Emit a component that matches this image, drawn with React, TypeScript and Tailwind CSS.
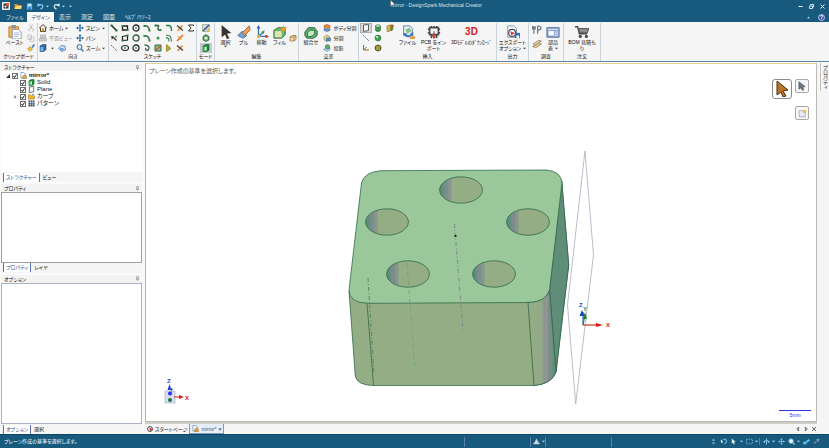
import { useState } from 'react'
import type { ReactNode } from 'react'

const icons: Record<string, ReactNode> = {
  app: (
    <>
      <rect width="16" height="16" rx="2" fill="#f4f4f4" />
      <path d="M3 3h6l4 4v6H3z" fill="#3c3c3c" />
      <path d="M7 2h7v6l-3 1z" fill="#e8542c" />
      <circle cx="7" cy="9" r="2" fill="#fff" />
    </>
  ),
  folder: (
    <>
      <path d="M1 4h5l2 2h7v8H1z" fill="#d99a2b" />
      <path d="M4 8h12l-3 6H1z" fill="#ffd77a" />
    </>
  ),
  save: (
    <>
      <path d="M2 1h12v14H2z" fill="#5fb8f0" />
      <path d="M5 2h6v5H5z" fill="#d8effc" />
      <path d="M5 10h6v5H5z" fill="#2577b5" />
    </>
  ),
  undo: (
    <>
      <path d="M4 5c6-3 10 0 9 4-1 3-3 4-5 5" fill="none" stroke="#7cc8ff" strokeWidth="3" />
      <path d="M0 8l2-8 6 6z" fill="#7cc8ff" />
    </>
  ),
  redo: (
    <>
      <path d="M12 5C6 2 2 5 3 9c1 3 3 4 5 5" fill="none" stroke="#d9e8f2" strokeWidth="3" />
      <path d="M16 8l-2-8-6 6z" fill="#d9e8f2" />
    </>
  ),
  paste: (
    <>
      <path d="M1 2h11v12H1z" fill="#f0b659" stroke="#b87b25" />
      <path d="M4 0h5v4H4z" fill="#8c929c" />
      <path d="M5 5h7l3 3v8H5z" fill="#fff" stroke="#8a94a8" />
      <path d="M7 9h6M7 11h6M7 13h5" stroke="#9db3d8" />
    </>
  ),
  cut: <path d="M5 1l4 9M11 1L7 10M6 10a2 2 0 1 0 .1 3M10 10a2 2 0 1 1-.1 3" fill="none" stroke="#b4b4b4" strokeWidth="1.6" />,
  copy: <path d="M2 2h7v9H2zM6 6h8v9H6z" fill="#f0f0f0" stroke="#bdbdbd" strokeWidth="1.4" />,
  brush: (
    <>
      <path d="M15 1l-5 6" stroke="#3568b8" strokeWidth="3" />
      <path d="M6 5l5 5-5 5-5-5z" fill="#e8c13f" stroke="#93701c" />
    </>
  ),
  home: (
    <>
      <path d="M1 8l7-7 7 7h-2v7H3V8z" fill="#ece8dc" stroke="#4d4433" strokeWidth="2" />
      <path d="M6 9h4v6H6z" fill="#c9922e" />
    </>
  ),
  plan: <path d="M3 2h10v5H3zM1 9h14v5H1z" fill="#d0d0d0" stroke="#a9a9a9" strokeWidth="1.4" />,
  cubeBlue: (
    <>
      <path d="M2 4l5-3h7v10l-4 4H2z" fill="#2b62a8" stroke="#173a66" />
      <path d="M3 6h6v8H3z" fill="#79b0e8" />
    </>
  ),
  viewCube: (
    <>
      <path d="M1 9l5-6 8 1 1 8-8 3z" fill="#cddff4" stroke="#466da3" strokeWidth="1.4" />
      <path d="M4 8h7v5H4z" fill="#6aa2dc" />
    </>
  ),
  move4: (
    <>
      <path d="M8 2v12M2 8h12" stroke="#2e6ca8" strokeWidth="2.4" />
      <path d="M8 0l3 4H5zM8 16l3-4H5zM0 8l4-3v6zM16 8l-4-3v6z" fill="#2e6ca8" />
    </>
  ),
  zoom: (
    <>
      <circle cx="7" cy="6" r="5" fill="#d9ebfa" stroke="#3a6b99" strokeWidth="2" />
      <path d="M10 10l5 5" stroke="#3a6b99" strokeWidth="2.6" />
    </>
  ),
  line: (
    <>
      <path d="M3 3l10 10" stroke="#1f1f1f" strokeWidth="2.8" />
      <path d="M1 1h4v4H1zM11 11h4v4h-4z" fill="#2c6b46" />
    </>
  ),
  rect: (
    <>
      <path d="M3 4h10v8H3z" fill="none" stroke="#1f1f1f" strokeWidth="2.6" />
      <path d="M1 2h4v4H1zM11 10h4v4h-4z" fill="#2c8a46" />
    </>
  ),
  circle: (
    <>
      <circle cx="8" cy="8" r="6" fill="none" stroke="#2b2b2b" strokeWidth="2.6" />
      <circle cx="8" cy="8" r="2" fill="#2f9a4d" />
    </>
  ),
  arc: (
    <>
      <path d="M2 4c6-2 10 2 11 9" fill="none" stroke="#35634a" strokeWidth="2.8" />
      <path d="M1 2h4v4H1zM11 11h4v4h-4z" fill="#2c8a46" />
    </>
  ),
  spline: (
    <>
      <path d="M3 3h6c2 3-4 5 0 9h5" fill="none" stroke="#29583d" strokeWidth="2.6" />
      <path d="M1 1h4v4H1zM11 10h4v4h-4z" fill="#2c8a46" />
    </>
  ),
  corner: <path d="M2 3h6c4 0 5 4 5 11" fill="none" stroke="#2e7a48" strokeWidth="2.8" />,
  trim: (
    <>
      <path d="M3 14L13 3" stroke="#e4902e" strokeWidth="3.4" />
      <path d="M2 3l12 10" stroke="#3a3a3a" strokeWidth="2.4" />
    </>
  ),
  sigma: <path d="M13 4V2H3l5 6-5 6h10v-2" fill="none" stroke="#333" strokeWidth="2" />,
  tangent: (
    <>
      <path d="M2 5c3 0 4 4 1 5M5 5l8 8" fill="none" stroke="#333" strokeWidth="2.4" />
      <circle cx="12" cy="5" r="2" fill="#2f9a4d" />
    </>
  ),
  rect3: (
    <>
      <path d="M3 5l10-2v9l-10 1z" fill="none" stroke="#1f1f1f" strokeWidth="2.4" />
      <path d="M1 11h4v4H1zM11 1h4v4h-4z" fill="#2c8a46" />
    </>
  ),
  ring: <circle cx="8" cy="8" r="6" fill="none" stroke="#33593f" strokeWidth="2.6" />,
  point: <circle cx="8" cy="8" r="3" fill="#2f9a4d" />,
  offset: <path d="M2 3c8-2 11 4 11 12M2 8c5-1 6 2 6 7" fill="none" stroke="#2e7a48" strokeWidth="2.2" />,
  extend: (
    <>
      <path d="M2 14L14 2" stroke="#e05a2e" strokeWidth="3" />
      <path d="M4 5l7 6" stroke="#e4a32e" strokeWidth="2.4" />
    </>
  ),
  dash: <path d="M2 2l12 12" stroke="#666" strokeWidth="2" strokeDasharray="4 2" />,
  ellipse: (
    <>
      <ellipse cx="8" cy="8" rx="7" ry="5" fill="none" stroke="#2b2b2b" strokeWidth="2.4" />
      <circle cx="8" cy="8" r="2" fill="#2f9a4d" />
    </>
  ),
  swirl: <path d="M3 2c8 0 11 5 8 9s-8 0-5-3" fill="none" stroke="#35634a" strokeWidth="2.6" />,
  pattern: (
    <>
      <path d="M2 2h12v12H2z" fill="#8cc48c" stroke="#286b3c" strokeWidth="2" />
      <path d="M3 13L14 3" stroke="#d0562e" strokeWidth="2.4" />
    </>
  ),
  project: <path d="M3 1l9 8-9 6z" fill="#7cbf6a" stroke="#b28a2a" strokeWidth="2" />,
  sketchMode: (
    <>
      <path d="M1 1h14v14H1z" fill="#d6dfd2" stroke="#6e8b6e" />
      <path d="M2 14L14 2" stroke="#3b4e9a" strokeWidth="3" />
      <path d="M10 9h5v6h-5z" fill="#e3c443" />
    </>
  ),
  sectionMode: (
    <>
      <path d="M2 5l6-4 6 4v7l-6 3-6-3z" fill="#5fa46a" stroke="#244f2e" strokeWidth="1.4" />
      <path d="M5 6h6v5H5z" fill="#d7ecd8" />
    </>
  ),
  solid: (
    <>
      <path d="M2 4l5-3h7v11l-4 3H2z" fill="#178a34" stroke="#0c5520" />
      <path d="M3 5h6v9H3z" fill="#5bd06f" />
      <path d="M6 6h3v6H6z" fill="#eaffea" />
    </>
  ),
  select: <path d="M3 0l11 9-5 1 3 5-3 1-2-5-4 3z" fill="#3a3330" />,
  pull: (
    <>
      <path d="M1 12l5-5 5 5-4 3z" fill="#6fa9e0" stroke="#32699e" />
      <path d="M6 9l8-8 1 4-6 7z" fill="#f0a05c" stroke="#9c5a25" />
    </>
  ),
  moveAxes: (
    <>
      <path d="M4 13V2M4 13h11M4 13l6-5" fill="none" stroke="#3679b8" strokeWidth="1.6" />
      <path d="M4 0l2 4H2z" fill="#2a58c4" />
      <path d="M16 13l-4 2v-4z" fill="#c4302a" />
      <path d="M11 6l-1 4-3-2z" fill="#2f9a4d" />
      <circle cx="4" cy="13" r="2" fill="#e3b53b" />
    </>
  ),
  fill: (
    <>
      <path d="M1 6l5-3h8v8l-4 4H1z" fill="#6cb46c" stroke="#2d6435" />
      <path d="M2 7h8v7H2z" fill="#dce4b0" />
      <path d="M12 0l1 3 3 0-2 2 1 3-3-2-3 2 1-3-2-2h3z" fill="#f59b2b" />
    </>
  ),
  smallBox: <path d="M2 6l5-3h7v8l-4 3H2zM2 6h8v8M10 6l4-3" fill="#f2ddb2" stroke="#8f6a2e" strokeWidth="1.4" />,
  combine: (
    <>
      <path d="M1 8l4-5 7 0 3 4v5l-4 3H3l-2-3z" fill="#5eae6a" stroke="#215c30" />
      <path d="M4 9l3-3h5v4l-3 3H4z" fill="#c5e8c4" stroke="#2c7240" />
    </>
  ),
  splitBody: (
    <>
      <path d="M2 3l6-2 6 2v4l-6 2-6-2z" fill="#e8893f" stroke="#8f4a16" />
      <path d="M2 9l6 2 6-2v4l-6 2-6-2z" fill="#6d9ed6" stroke="#2c5587" />
    </>
  ),
  split: (
    <>
      <path d="M2 6l5-4 6 3v6l-6 4-5-3z" fill="#e7d68e" stroke="#7e6d2f" />
      <path d="M7 8h8v6H7z" fill="#5b8fd0" stroke="#2c5587" />
    </>
  ),
  projectTo: (
    <>
      <path d="M1 11l6-4 8 3-6 5z" fill="#b7d4ef" stroke="#3a6c9c" />
      <path d="M5 3l4-2 4 2v5l-4 2-4-2z" fill="#5eae6a" stroke="#215c30" />
    </>
  ),
  plane: <path d="M3 2l10-1v12l-10 2z" fill="#fafafa" stroke="#505050" strokeWidth="1.8" />,
  cylinder: (
    <>
      <path d="M3 4v8c0 4 10 4 10 0V4z" fill="#3c9a4c" stroke="#1c5a2a" />
      <ellipse cx="8" cy="4" rx="5" ry="2.6" fill="#c9ecc9" stroke="#1c5a2a" />
    </>
  ),
  shell: (
    <>
      <path d="M2 4l5-2h3v10l-3 3H2z" fill="#d9b145" stroke="#7a601b" />
      <path d="M10 2h4v9l-4 3z" fill="#4fa65c" stroke="#22602e" />
      <circle cx="13" cy="4" r="2.4" fill="#d84f2e" />
    </>
  ),
  sphere: (
    <>
      <circle cx="8" cy="8" r="6" fill="#3ea252" stroke="#1d6630" />
      <circle cx="6" cy="6" r="2" fill="#d0f2d0" />
    </>
  ),
  axis: (
    <>
      <path d="M3 2v10h11" fill="none" stroke="#b8602f" strokeWidth="2" />
      <path d="M3 12l6-6" stroke="#2f8a4d" strokeWidth="2" />
    </>
  ),
  gear: (
    <>
      <circle cx="8" cy="8" r="6" fill="#6b7a2c" stroke="#54421a" strokeWidth="1.5" />
      <path d="M4 6h8M4 10h8" stroke="#e8bd3b" strokeWidth="2" />
    </>
  ),
  file: (
    <>
      <path d="M3 1h7l3 3v8H3z" fill="#e9f1fb" stroke="#5178ae" />
      <path d="M5 5l5-2 2 4-5 3z" fill="#8cbf7c" />
      <path d="M3 9c0 6 8 6 9 3l2 1V8l-4 2 1 1c-1 2-4 2-5-2z" fill="#3d78c2" />
      <path d="M10 13h6v3h-6z" fill="#e49b38" />
    </>
  ),
  pcb: (
    <>
      <path d="M3 3h10v8H3zM5 1v3M8 1v3M11 1v3M5 11v4M11 11v4M1 5h3M12 5h3M1 9h3M12 9h3" fill="none" stroke="#4b4b4b" strokeWidth="1.8" />
      <path d="M8 7v6M6 12l2 3 2-3" fill="none" stroke="#c23a34" strokeWidth="1.4" />
    </>
  ),
  exportOpt: (
    <>
      <path d="M2 1h7l3 3v10H2z" fill="#f6f8fb" stroke="#7890b0" />
      <circle cx="7" cy="9" r="4" fill="#fff" stroke="#4b4b4b" strokeWidth="1.4" />
      <path d="M5 7l5 2-4 3z" fill="#d8372c" />
      <path d="M10 9h6v6h-6z" fill="#3b6db4" />
      <path d="M12 12h3v3h-3z" fill="#fff" />
    </>
  ),
  tools: (
    <>
      <path d="M3 2v12M1 2v4h4V2" fill="none" stroke="#6f7b80" strokeWidth="2" />
      <path d="M9 14V2c7-1 7 6 0 6" fill="none" stroke="#6f7b80" strokeWidth="2" />
    </>
  ),
  measure: (
    <>
      <path d="M1 12l9-6 5 2-9 6z" fill="#e9cf94" stroke="#7d6536" />
      <path d="M2 8l9-6 4 1-9 7z" fill="#ddd0b8" stroke="#7d6536" />
    </>
  ),
  bomTable: (
    <>
      <path d="M1 3h14v11H1z" fill="#8fa9d0" stroke="#536d95" />
      <path d="M3 7h6v5H3z" fill="#fff" />
      <path d="M2 5h12M10 8h4M10 10h4M10 12h4" stroke="#e1ebfa" />
    </>
  ),
  cart: (
    <>
      <path d="M0 2h3l2 8h9" fill="none" stroke="#4a4a4a" strokeWidth="1.6" />
      <path d="M4 4h12l-2 5H5z" fill="#8a8a8a" stroke="#4a4a4a" />
      <circle cx="6" cy="13" r="1.8" fill="#4a4a4a" />
      <circle cx="13" cy="13" r="1.8" fill="#4a4a4a" />
    </>
  ),
  doc: (
    <>
      <path d="M2 1h7l3 3v10H2z" fill="#fff" stroke="#4f79b5" strokeWidth="1.4" />
      <path d="M6 10l4-4 5 4v5H6z" fill="#e0a63c" stroke="#86601b" />
    </>
  ),
  gold: (
    <>
      <path d="M1 4h5l2 2h7v8H1z" fill="#edb52d" stroke="#9c701a" />
      <path d="M9 2l4-1 1 4-4 1z" fill="#7ba9dc" />
    </>
  ),
  grid: (
    <path d="M1 1h4v4H1zM6 1h4v4H6zM11 1h4v4h-4zM1 6h4v4H1zM6 6h4v4H6zM11 6h4v4h-4zM1 11h4v4H1zM6 11h4v4H6zM11 11h4v4h-4z" fill="#39506a" />
  ),
  cursorGold: <path d="M3 0l11 9-5 1 3 5-3 1-2-5-4 3z" fill="#b9742a" stroke="#4d2f12" />,
  cursorGray: <path d="M3 1l10 8-4 1 2 4-2 1-3-4-3 2z" fill="#6c7580" stroke="#48505a" />,
  newPlane: (
    <>
      <path d="M2 3h8l3 2v9H2z" fill="#e8ecf4" stroke="#7b86a0" />
      <path d="M12 0l1 3h3l-2 2 1 3-3-2-3 2 1-3-2-2h3z" fill="#f2b22f" />
    </>
  ),
  start: (
    <>
      <circle cx="8" cy="8" r="6.5" fill="#fff" stroke="#333" strokeWidth="2.4" />
      <path d="M6 4l9 4-7 6z" fill="#d8322b" />
    </>
  ),
  updown: <path d="M8 1l4 5H4zM8 15l4-5H4z" fill="#8fb0c6" />,
  rotate: (
    <>
      <path d="M2 3l5 5-2 1 1 4-4-4z" fill="#e7eef4" />
      <path d="M7 4c5-4 10 1 7 6l-4 3" fill="none" stroke="#63b7ee" strokeWidth="2.8" />
    </>
  ),
  cursorLight: <path d="M4 1l9 8-4 1 2 4-2 1-3-4-2 2z" fill="#e7eef4" />,
  marquee: <path d="M1 3h14v10H1z" fill="none" stroke="#6cb6e6" strokeWidth="2" strokeDasharray="3 2" />,
  orbit: (
    <>
      <path d="M8 1v14M2 10c2-6 10-6 12 0" fill="none" stroke="#7fc4f2" strokeWidth="2.4" />
      <path d="M0 8l5-1-1 5zM16 8l-5-1 1 5z" fill="#7fc4f2" />
    </>
  ),
  panLight: (
    <>
      <path d="M8 2v12M2 8h12" stroke="#7fb6de" strokeWidth="2" />
      <path d="M8 0l3 4H5zM8 16l3-4H5zM0 8l4-3v6zM16 8l-4-3v6z" fill="#7fb6de" />
    </>
  ),
  zoomLight: (
    <>
      <circle cx="7" cy="7" r="5" fill="#e7f4fd" stroke="#93cdf2" strokeWidth="2" />
      <path d="M11 11l4 4" stroke="#93cdf2" strokeWidth="3" />
    </>
  ),
  prev: <path d="M0 14l2-7 3 2 8-7 3 4-8 5v3z" fill="#63c1f2" />,
  next: <path d="M1 11l8-5-2-3 8-2-2 8-3-2-6 6z" fill="#7f9bb0" />,
  warn: <path d="M8 1l5 10h2v3H1v-3h2z" fill="#c8d4dc" />,
}

function Icon({ name, size = 'size-2' }: { name: string; size?: string }) {
  return (
    <svg viewBox="0 0 16 16" className={`${size} shrink-0`} aria-hidden="true">
      {icons[name]}
    </svg>
  )
}

function Caret({ light }: { light?: boolean }) {
  return (
    <svg viewBox="0 0 4 4" className="size-[3px] shrink-0" aria-hidden="true">
      <path d="M0 1h4L2 3z" fill={light ? '#dbe7ef' : '#333'} />
    </svg>
  )
}

function Group({ label, width, children }: { label: string; width: string; children: ReactNode }) {
  return (
    <section className={`${width} flex shrink-0 flex-col border-r border-[#c9d3dc]`} aria-label={label}>
      <div className="flex h-[30px] items-stretch justify-center">{children}</div>
      <div className="text-center text-[5px] leading-[7px] whitespace-nowrap">{label}</div>
    </section>
  )
}

function BigButton({ icon, lines, width, caret }: { icon: string; lines: string[]; width: string; caret?: boolean }) {
  return (
    <button className={`${width} flex shrink-0 flex-col items-center pt-[2px] text-[5px] leading-[6px] whitespace-nowrap`}>
      <Icon name={icon} size="size-[14px]" />
      {lines.map((line, i) => (
        <span key={line} className="flex items-center gap-[2px]">
          {line}
          {caret && lines.length > 1 && i === lines.length - 1 && <Caret />}
        </span>
      ))}
      {caret && lines.length === 1 && <Caret />}
    </button>
  )
}

function RowButton({ icon, text, caret, muted }: { icon: string; text: string; caret?: boolean; muted?: boolean }) {
  return (
    <button className={`flex h-[10px] items-center gap-[2px] text-[5px] leading-[8px] whitespace-nowrap ${muted ? 'text-[#999]' : ''}`}>
      <Icon name={icon} />
      <span>{text}</span>
      {caret && <Caret />}
    </button>
  )
}

const sketchTools = [
  'line', 'rect', 'circle', 'arc', 'spline', 'corner', 'trim', 'sigma',
  'tangent', 'rect3', 'ring', 'arc', 'point', 'offset', 'extend', '',
  'dash', 'ellipse', 'circle', 'swirl', 'pattern', 'project', 'trim', '',
]

const insertTools = ['plane', 'cylinder', 'shell', 'dash', 'sphere', '', 'axis', 'gear', '']

function Ribbon() {
  return (
    <div className="flex h-10 shrink-0 overflow-hidden border-b border-[#5f86a6] bg-[#f5f5f5] pt-px">
      <Group label="クリップボード" width="w-[38px]">
        <BigButton icon="paste" lines={['ペースト']} width="w-[25px]" />
        <div className="flex flex-col">
          {['cut', 'copy', 'brush'].map((name) => (
            <button key={name} aria-label={name} className="flex h-[10px] items-center">
              <Icon name={name} />
            </button>
          ))}
        </div>
      </Group>
      <Group label="向き" width="w-[71px]">
        <div className="flex w-[37px] flex-col">
          <RowButton icon="home" text="ホーム" caret />
          <RowButton icon="plan" text="平面ビュー" muted />
          <div className="flex h-[10px] items-center gap-1">
            <button aria-label="cube" className="flex items-center gap-1">
              <Icon name="cubeBlue" />
              <Caret />
            </button>
            <button aria-label="view">
              <Icon name="viewCube" />
            </button>
          </div>
        </div>
        <div className="flex w-[31px] flex-col">
          <RowButton icon="move4" text="スピン" caret />
          <RowButton icon="move4" text="パン" />
          <RowButton icon="zoom" text="ズーム" caret />
        </div>
      </Group>
      <Group label="スケッチ" width="w-[88px]">
        <div className="grid flex-1 grid-cols-8">
          {sketchTools.map((name, i) =>
            name ? (
              <button key={i} aria-label={name} className="flex h-[10px] items-center justify-center">
                <Icon name={name} />
              </button>
            ) : (
              <span key={i} />
            ),
          )}
        </div>
      </Group>
      <Group label="モード" width="w-[18px]">
        <div className="flex flex-col">
          {['sketchMode', 'sectionMode', 'solid'].map((name) => (
            <button
              key={name}
              aria-label={name}
              className={`flex h-[10px] w-3 items-center justify-center ${name === 'solid' ? 'bg-[#c5c9cb]' : ''}`}
            >
              <Icon name={name} />
            </button>
          ))}
        </div>
      </Group>
      <Group label="編集" width="w-[84px]">
        <BigButton icon="select" lines={['選択']} width="w-[18px]" caret />
        <BigButton icon="pull" lines={['プル']} width="w-[18px]" />
        <BigButton icon="moveAxes" lines={['移動']} width="w-[18px]" />
        <BigButton icon="fill" lines={['フィル']} width="w-[18px]" />
        <button aria-label="shell" className="flex items-center">
          <Icon name="smallBox" />
        </button>
      </Group>
      <Group label="交差" width="w-[60px]">
        <BigButton icon="combine" lines={['組合せ']} width="w-[21px]" />
        <div className="flex flex-col pl-[2px]">
          <RowButton icon="splitBody" text="ボディ分割" />
          <RowButton icon="split" text="分割" />
          <RowButton icon="projectTo" text="投影" />
        </div>
      </Group>
      <Group label="挿入" width="w-[138px]">
        <div className="grid w-[36px] shrink-0 grid-cols-3">
          {insertTools.map((name, i) =>
            name ? (
              <button
                key={i}
                aria-label={name}
                className={`flex h-[10px] items-center justify-center ${name === 'plane' ? 'border border-[#aab0b4] bg-[#d5d9dc]' : ''}`}
              >
                <Icon name={name} />
              </button>
            ) : (
              <span key={i} />
            ),
          )}
        </div>
        <BigButton icon="file" lines={['ファイル']} width="w-[24px]" />
        <BigButton icon="pcb" lines={['PCB をイン', 'ポート']} width="w-[28px]" />
        <button className="flex w-[48px] shrink-0 flex-col items-center pt-[2px] text-[5px] leading-[6px] whitespace-nowrap">
          <span className="text-[10px] leading-[14px] font-black text-[#d3201c]">3D</span>
          <span>3Dﾓﾃﾞﾙのﾀﾞｳﾝﾛｰﾄﾞ</span>
        </button>
      </Group>
      <Group label="出力" width="w-[32px]">
        <BigButton icon="exportOpt" lines={['エクスポート', 'オプション']} width="w-[30px]" caret />
      </Group>
      <Group label="調査" width="w-[35px]">
        <div className="flex w-[14px] flex-col items-center gap-1 pt-[2px]">
          <button aria-label="tools">
            <Icon name="tools" size="size-[10px]" />
          </button>
          <button aria-label="measure">
            <Icon name="measure" size="size-[10px]" />
          </button>
        </div>
        <BigButton icon="bomTable" lines={['部品', '表']} width="w-[18px]" caret />
      </Group>
      <Group label="注文" width="w-[37px]">
        <BigButton icon="cart" lines={['BOM 見積も', 'り']} width="w-[34px]" />
      </Group>
    </div>
  )
}

function PanelHeader({ title }: { title: string }) {
  return (
    <header className="flex h-2 shrink-0 items-center justify-between bg-[#f3f3f3] px-[3px] text-[5px] leading-[8px]">
      <h2>{title}</h2>
      <svg viewBox="0 0 6 10" className="h-[5px] w-[3px]" aria-hidden="true">
        <path d="M1 1h4v5H1zM0 6h6M3 6v4" fill="none" stroke="#777" />
      </svg>
    </header>
  )
}

function PanelTabs({ tabs }: { tabs: string[] }) {
  const [active, setActive] = useState(0)
  return (
    <div className="flex h-[10px] shrink-0 items-center bg-[#f5f5f5] pl-[2px] text-[5px] leading-[9px]">
      {tabs.map((tab, i) => (
        <button
          key={tab}
          onClick={() => setActive(i)}
          className={i === active ? 'border-x border-[#5c73a3] bg-white px-[2px] text-[#2f5590]' : 'px-[3px]'}
        >
          {tab}
        </button>
      ))}
    </div>
  )
}

function TreeItem({ icon, label, root, branch }: { icon: string; label: string; root?: boolean; branch?: boolean }) {
  return (
    <li className={`flex h-[7px] items-center ${root ? 'pl-[5px]' : 'pl-[13px]'}`}>
      <span className="flex w-[6px] items-center">
        {root && (
          <svg viewBox="0 0 4 4" className="size-1" aria-hidden="true">
            <path d="M4 0v4H0z" fill="#333" />
          </svg>
        )}
        {branch && (
          <svg viewBox="0 0 4 6" className="h-1 w-[3px]" aria-hidden="true">
            <path d="M1 1l2 2-2 2z" fill="none" stroke="#555" />
          </svg>
        )}
      </span>
      <label className="flex items-center gap-[2px]">
        <span className="relative flex">
          <input type="checkbox" defaultChecked className="peer size-[6px] appearance-none border border-[#6d6d6d] bg-white" />
          <svg viewBox="0 0 12 12" className="pointer-events-none absolute inset-0 hidden size-[6px] peer-checked:block" aria-hidden="true">
            <path d="M3 6l2 3 4-6" fill="none" stroke="#111" strokeWidth="2" />
          </svg>
        </span>
        <Icon name={icon} size="size-[7px]" />
        <span className={`text-[6px] leading-[7px] ${root ? 'font-bold' : ''}`}>{label}</span>
      </label>
    </li>
  )
}

function Sidebar() {
  return (
    <aside className="flex w-[143px] shrink-0 flex-col pr-px pl-px">
      <PanelHeader title="ストラクチャー" />
      <ul className="min-h-0 flex-[101] overflow-hidden bg-white pt-px">
        <TreeItem icon="doc" label="mirror*" root />
        <TreeItem icon="solid" label="Solid" />
        <TreeItem icon="plane" label="Plane" />
        <TreeItem icon="gold" label="カーブ" branch />
        <TreeItem icon="grid" label="パターン" />
      </ul>
      <PanelTabs tabs={['ストラクチャー', 'ビュー']} />
      <div className="mt-[2px] flex min-h-0 flex-[79] flex-col">
        <PanelHeader title="プロパティ" />
        <div className="flex-1 border border-[#9da1a3] bg-white" />
      </div>
      <PanelTabs tabs={['プロパティ', 'レイヤ']} />
      <div className="mt-[2px] flex min-h-0 flex-[150] flex-col">
        <PanelHeader title="オプション" />
        <div className="flex-1 border border-[#a9b3c4] bg-white" />
      </div>
      <PanelTabs tabs={['オプション', '選択']} />
    </aside>
  )
}

const holes = [
  [461, 190],
  [387, 222],
  [528, 222],
  [408, 274],
  [494, 274],
]

function Model() {
  return (
    <svg viewBox="146 64 670 357" className="h-full w-full" role="img" aria-label="mirror">
      <defs>
        <linearGradient id="hole">
          <stop offset="0" stopColor="#4f8a74" />
          <stop offset="0.1" stopColor="#679080" />
          <stop offset="0.13" stopColor="#8a8590" />
          <stop offset="0.18" stopColor="#719486" />
          <stop offset="0.22" stopColor="#928f96" />
          <stop offset="0.27" stopColor="#879c85" />
          <stop offset="0.3" stopColor="#95ad84" />
        </linearGradient>
        <linearGradient id="edge">
          <stop offset="0" stopColor="#95ad84" />
          <stop offset="0.5" stopColor="#93a989" />
          <stop offset="0.58" stopColor="#918e98" />
          <stop offset="0.66" stopColor="#86a18a" />
          <stop offset="0.74" stopColor="#888493" />
          <stop offset="0.84" stopColor="#6b9380" />
          <stop offset="1" stopColor="#5c8b78" />
        </linearGradient>
      </defs>
      <path d="M585 151L593.5 255L575.7 404L567.5 305Z" fill="none" stroke="#a9adbc" strokeWidth="0.8" />
      <g stroke="#2f6a49" strokeWidth="0.8" strokeLinejoin="round">
        <path d="M561.7 181L568.7 265L556 372Q552 384 534 385.5L373 385.5Q357 385 355.3 376L349 291Z" fill="#95ad84" />
        <path d="M561.7 181L568.7 265L556 372L549.5 290Z" fill="#5f8d79" />
        <path d="M528 302.5Q546 302 549.5 290L556 372Q552 384 534 385.5Z" fill="url(#edge)" />
        <path d="M367 303L373.5 385" fill="none" />
        <path
          d="M361.5 183Q364 172 381 170.7L546 170Q561 171 562 183L549.5 290Q546 302 528 302.5L368 303.3Q349 303 349 290Z"
          fill="#9bc89b"
        />
        {holes.map(([cx, cy]) => (
          <ellipse key={`${cx}-${cy}`} cx={cx} cy={cy} rx="21.4" ry="13.2" fill="url(#hole)" />
        ))}
      </g>
      <g fill="none" strokeWidth="0.8" strokeDasharray="4 2 1 2">
        <path d="M368 278L374 373" stroke="#3f7d4b" />
        <path d="M407 263L415 370" stroke="#6ba274" />
        <path d="M454.5 224L463 331" stroke="#77788a" />
      </g>
      <path d="M454.5 235h2v2h-2z" fill="#222" />
      <g strokeWidth="1.2">
        <path d="M583 325V312" stroke="#2c62c8" />
        <path d="M583 325L585 314" stroke="#208a37" />
        <path d="M583 325H597" stroke="#d6301e" />
      </g>
      <path d="M582 310l2.5 6h-5z" fill="#1d3fd0" />
      <path d="M585 312l2 7h-4z" fill="#1d8432" />
      <path d="M603 325l-7-2v4z" fill="#d6200e" />
      <g className="font-bold" fontSize="6">
        <text x="579" y="307" fill="#2a3bd8">Z</text>
        <text x="583" y="311" fill="#1d8432">Y</text>
        <text x="606" y="327" fill="#d6200e">X</text>
        <text x="167" y="383" fill="#2a3bd8">Z</text>
        <text x="185" y="400" fill="#d6200e">X</text>
      </g>
      <path d="M165 391h10v12h-10z" fill="#d9dcf0" stroke="#a5a9c4" strokeWidth="0.6" />
      <path d="M169.5 384l2 6h-4z" fill="#1d3fd0" />
      <path d="M171 388l2 1-2 3z" fill="#1d8432" />
      <circle cx="170" cy="393.5" r="2" fill="#2430f0" />
      <circle cx="170" cy="400" r="2" fill="#197c2d" />
      <path d="M174 397h6" stroke="#d6200e" />
      <path d="M184 397l-5-2v4z" fill="#d6200e" />
      <path d="M779 410.5h32" stroke="#2a36f0" />
      <text x="795" y="417" fontSize="5" textAnchor="middle" fill="#2a36f0">5mm</text>
    </svg>
  )
}

function Workspace() {
  return (
    <main className="flex min-w-0 flex-1 flex-col pl-[2px]">
      <div className="relative min-h-0 flex-1 border border-t-[#e3cf9a] border-r-[#bdbab4] border-b-[#bdbab4] border-l-[#b3b3b3] bg-white">
        <Model />
        <p className="absolute top-[3px] left-[3px] text-[6px] leading-[8px] text-[#555]">プレーン作成の基準を選択します。</p>
        <button aria-label="select" className="absolute top-[15px] right-[24px] flex size-5 items-center justify-center rounded-[3px] border border-[#8d8d8d] bg-white">
          <Icon name="cursorGold" size="size-4" />
        </button>
        <button aria-label="cursor" className="absolute top-[15px] right-[7px] flex size-[14px] items-center justify-center rounded-[2px] border border-[#a8a8a8] bg-[#f7f7f7]">
          <Icon name="cursorGray" size="size-[10px]" />
        </button>
        <button aria-label="plane" className="absolute top-[42px] right-[7px] flex size-[14px] items-center justify-center rounded-[2px] border border-[#a8a8a8] bg-[#f7f7f7]">
          <Icon name="newPlane" size="size-[9px]" />
        </button>
      </div>
      <div className="flex h-3 shrink-0 items-center border-t-2 border-[#cfcdc9] bg-[#f5f5f5] text-[5px] leading-[8px]">
        <button className="flex items-center gap-[2px] px-[2px] whitespace-nowrap">
          <Icon name="start" size="size-[6px]" />
          スタートページ
        </button>
        <button className="flex h-[10px] items-center gap-[2px] border border-t-0 border-[#7c98bd] bg-[#e8eef7] px-[2px] text-[#2f5590]">
          <Icon name="doc" size="size-[7px]" />
          mirror*
          <span className="text-black">×</span>
        </button>
        <div className="ml-auto flex gap-1 pr-px text-[#333]">
          <button aria-label="back">
            <svg viewBox="0 0 6 6" className="size-1"><path d="M4 0v6L1 3z" fill="none" stroke="#333" /></svg>
          </button>
          <button aria-label="forward">
            <svg viewBox="0 0 6 6" className="size-1"><path d="M2 0v6l3-3z" fill="none" stroke="#333" /></svg>
          </button>
          <button aria-label="close tab">
            <svg viewBox="0 0 6 6" className="size-1"><path d="M0 0l6 6M6 0L0 6" stroke="#222" /></svg>
          </button>
        </div>
      </div>
    </main>
  )
}

const menus = ['表示', '測定', '図面', 'ﾍﾙﾌﾟ/ﾘｿｰｽ']

function TitleBar() {
  return (
    <header className="shrink-0 bg-[#185a7d] text-white">
      <div className="relative flex h-3 items-center gap-1 pr-1 pl-[2px]">
        <Icon name="app" />
        <button aria-label="open"><Icon name="folder" /></button>
        <button aria-label="save"><Icon name="save" size="size-[7px]" /></button>
        <button aria-label="undo" className="flex items-center gap-[2px]"><Icon name="undo" size="size-[7px]" /><Caret light /></button>
        <button aria-label="redo" className="flex items-center gap-[2px]"><Icon name="redo" size="size-[7px]" /><Caret light /></button>
        <button aria-label="customize"><Caret light /></button>
        {/* window title stays centred whatever the toolbar width */}
        <h1 className="absolute top-0 left-1/2 ml-[22px] -translate-x-1/2 text-[5px] leading-[10px] whitespace-nowrap text-[#d5e2ea]">
          mirror - DesignSpark Mechanical Creator
        </h1>
        <svg viewBox="0 0 16 16" className="absolute top-0 left-[47%] size-[7px]" aria-hidden="true">
          <path d="M1 0l11 10-5 1 3 4-3 1-2-5-4 3z" fill="#fff" stroke="#333" />
        </svg>
        <div className="ml-auto flex items-center gap-[6px]">
          <button aria-label="minimize"><svg viewBox="0 0 10 10" className="size-[5px]"><path d="M1 5h8" stroke="#fff" strokeWidth="2" /></svg></button>
          <button aria-label="restore"><svg viewBox="0 0 10 10" className="size-[5px]"><path d="M3 3V1h6v5H7M1 4h6v5H1z" fill="none" stroke="#fff" strokeWidth="1.6" /></svg></button>
          <button aria-label="close"><svg viewBox="0 0 10 10" className="size-[5px]"><path d="M1 1l8 8M9 1L1 9" stroke="#fff" strokeWidth="2" /></svg></button>
        </div>
      </div>
      <nav className="flex h-[10px] items-center pr-1 pl-[3px] text-[6px] leading-[8px] whitespace-nowrap text-[#d5e6f0]">
        <button className="w-6 text-[5px]">ファイル</button>
        <button className="h-[10px] w-[27px] bg-[#f8f8f8] text-[5px] text-[#1d4e79]">デザイン</button>
        {menus.map((menu) => (
          <button key={menu} className="px-[5px]">{menu}</button>
        ))}
        <div className="ml-auto flex items-center gap-2">
          <button aria-label="collapse ribbon" className="rotate-180"><Caret light /></button>
          <button aria-label="help" className="flex size-[7px] items-center justify-center rounded-full border border-[#b9c4ea] bg-[#3c56b0] text-[5px] leading-[5px] font-bold text-white">?</button>
        </div>
      </nav>
    </header>
  )
}

function StatusBar() {
  return (
    <footer className="flex h-[14px] shrink-0 items-center border-t border-[#0f4667] bg-[#185a7d] pr-[9px] pl-1 text-[5px] text-white">
      <span>プレーン作成の基準を選択します。</span>
      <div className="ml-auto flex h-[10px] items-center">
        <span className="h-full w-[66px] border-l border-[#5d7fae]" />
        <span className="flex h-full w-4 items-center gap-[2px] border-x border-[#5d7fae] pl-[2px]">
          <Icon name="warn" size="size-[7px]" />
          <Caret light />
        </span>
        <span className="h-full w-[66px] border-r border-[#5d7fae]" />
      </div>
      <div className="ml-[98px] flex items-center gap-[3px]">
        <button aria-label="scroll"><Icon name="updown" size="size-[7px]" /></button>
        <button aria-label="rotate"><Icon name="rotate" size="size-[7px]" /></button>
        <button aria-label="select mode" className="flex items-center gap-[3px]"><Icon name="cursorLight" size="size-[7px]" /><Caret light /></button>
        <button aria-label="marquee" className="flex items-center gap-[2px] border-r border-[#6d77a8] pr-px"><Icon name="marquee" size="size-[7px]" /><Caret light /></button>
        <button aria-label="orbit" className="flex items-center gap-[2px]"><Icon name="orbit" size="size-[7px]" /><Caret light /></button>
        <button aria-label="pan"><Icon name="panLight" size="size-[7px]" /></button>
        <button aria-label="zoom" className="flex items-center gap-[2px]"><Icon name="zoomLight" size="size-[7px]" /><Caret light /></button>
        <button aria-label="previous view"><Icon name="prev" size="size-[7px]" /></button>
        <button aria-label="next view"><Icon name="next" size="size-[7px]" /></button>
      </div>
    </footer>
  )
}

export default function App() {
  return (
    <div
      lang="ja"
      className="flex h-screen flex-col overflow-hidden bg-[#fafafa] font-['Liberation_Sans','Noto_Sans_CJK_JP',sans-serif] text-[#111] [font-feature-settings:'palt']"
    >
      <TitleBar />
      <Ribbon />
      <div className="flex min-h-0 flex-1 pt-px">
        <Sidebar />
        <Workspace />
        <aside className="flex w-3 shrink-0 justify-end bg-[#f5f5f5]">
          <button className="h-7 border-l border-[#c2c2c2] text-[5px] leading-[8px] [writing-mode:vertical-rl]">プロパティ</button>
        </aside>
      </div>
      <StatusBar />
    </div>
  )
}
